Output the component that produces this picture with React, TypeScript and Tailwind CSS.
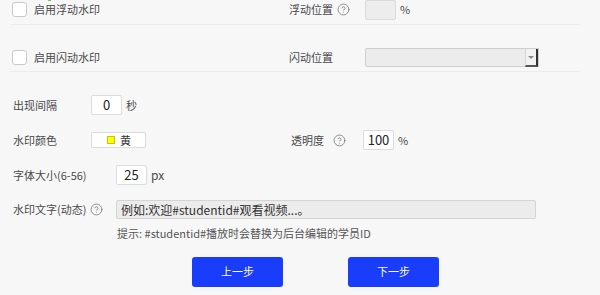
import { CircleHelp } from 'lucide-react'

const font = { fontFamily: '"Noto Sans CJK SC", "Noto Sans", sans-serif' }

function Help() {
  return <CircleHelp className="w-[13px] h-[13px] text-[#777]" strokeWidth={1.5} />
}

function Checkbox() {
  return <span className="w-[15px] h-[15px] rounded-[3px] border border-[#c9c9c9] bg-white shrink-0" />
}

function NumBox({ value, disabled }: { value?: string; disabled?: boolean }) {
  return (
    <span
      className={`w-[31px] h-[20px] rounded-[2px] border flex items-center justify-center text-[13px] text-[#222] ${
        disabled ? 'bg-[#ededed] border-[#dadada]' : 'bg-white border-[#dcdcdc]'
      }`}
    >
      {value}
    </span>
  )
}

export default function App() {
  return (
    <div className="w-[600px] h-[295px] bg-[#f7f7f7] text-[11px] text-[#4a4a4a] overflow-hidden relative" style={font}>
      <span className="absolute left-[48px] top-0 w-[3px] h-[1px] bg-[#6ccb5f]" />

      {/* 浮动水印 */}
      <div className="mx-[10px] w-[570px] h-[25px] border-b border-[#ececec] flex">
        <div className="w-[279px] h-[19px] flex items-center pl-[2px] gap-[7px]">
          <Checkbox />
          <span>启用浮动水印</span>
        </div>
        <div className="h-[19px] flex items-center">
          <span className="w-[48px]">浮动位置</span>
          <Help />
          <span className="ml-[15px]">
            <NumBox disabled />
          </span>
          <span className="ml-[4px]">%</span>
        </div>
      </div>

      {/* 闪动水印 */}
      <div className="mx-[10px] w-[570px] h-[47px] pt-[23px] border-b border-[#ececec] flex">
        <div className="w-[279px] h-[19px] flex items-center pl-[2px] gap-[7px]">
          <Checkbox />
          <span>启用闪动水印</span>
        </div>
        <div className="h-[19px] flex items-center">
          <span className="w-[76px]">闪动位置</span>
          <span className="w-[174px] h-[19px] flex border border-[#cfcfcf] rounded-l-[2px] bg-[#ececec]">
            <span className="flex-1" />
            <span className="w-[13px] h-[18px] bg-[#f2f2f2] border-l border-[#d6d6d6] border-r-2 border-b-2 border-r-[#333] border-b-[#555] flex items-center justify-center">
              <span className="w-0 h-0 border-l-[3px] border-r-[3px] border-t-[3px] border-l-transparent border-r-transparent border-t-[#888]" />
            </span>
          </span>
        </div>
      </div>

      <div className="pl-[13px] pt-[23px] flex flex-col">
        {/* 出现间隔 */}
        <div className="h-[20px] flex items-center">
          <span className="w-[78px]">出现间隔</span>
          <NumBox value="0" />
          <span className="ml-[4px]">秒</span>
        </div>

        {/* 水印颜色 / 透明度 */}
        <div className="h-[20px] mt-[15px] flex items-center">
          <span className="w-[78px]">水印颜色</span>
          <span className="w-[55px] h-[16px] bg-white border border-[#dcdcdc] rounded-[2px] flex items-center pl-[15px] gap-[5px]">
            <span className="w-[8px] h-[8px] bg-[#ffff00] border border-[#c8c800]" />
            <span className="text-[#333]">黄</span>
          </span>
          <span className="ml-[145px] w-[42px]">透明度</span>
          <Help />
          <span className="ml-[17px]">
            <NumBox value="100" />
          </span>
          <span className="ml-[4px]">%</span>
        </div>

        {/* 字体大小 */}
        <div className="h-[20px] mt-[15px] flex items-center">
          <span className="w-[103px]">字体大小(6-56)</span>
          <NumBox value="25" />
          <span className="ml-[4px] text-[12px]">px</span>
        </div>

        {/* 水印文字 */}
        <div className="h-[19px] mt-[15px] flex items-center">
          <span className="w-[77px]">水印文字(动态)</span>
          <Help />
          <span className="ml-[13px] w-[420px] h-[19px] bg-[#ececec] border border-[#d4d4d4] rounded-[2px] flex items-center pl-[4px] text-[12px] text-[#333]">
            例如:欢迎#studentid#观看视频...。
          </span>
        </div>
        <div className="mt-[6px] pl-[104px] text-[#555]">提示: #studentid#播放时会替换为后台编辑的学员ID</div>

        {/* 按钮 */}
        <div className="mt-[15px] pl-[179px] flex gap-[65px]">
          <button className="w-[91px] h-[30px] rounded-[3px] bg-[#1a3cfb] text-white text-[11px]">上一步</button>
          <button className="w-[91px] h-[30px] rounded-[3px] bg-[#1a3cfb] text-white text-[11px]">下一步</button>
        </div>
      </div>
    </div>
  )
}
